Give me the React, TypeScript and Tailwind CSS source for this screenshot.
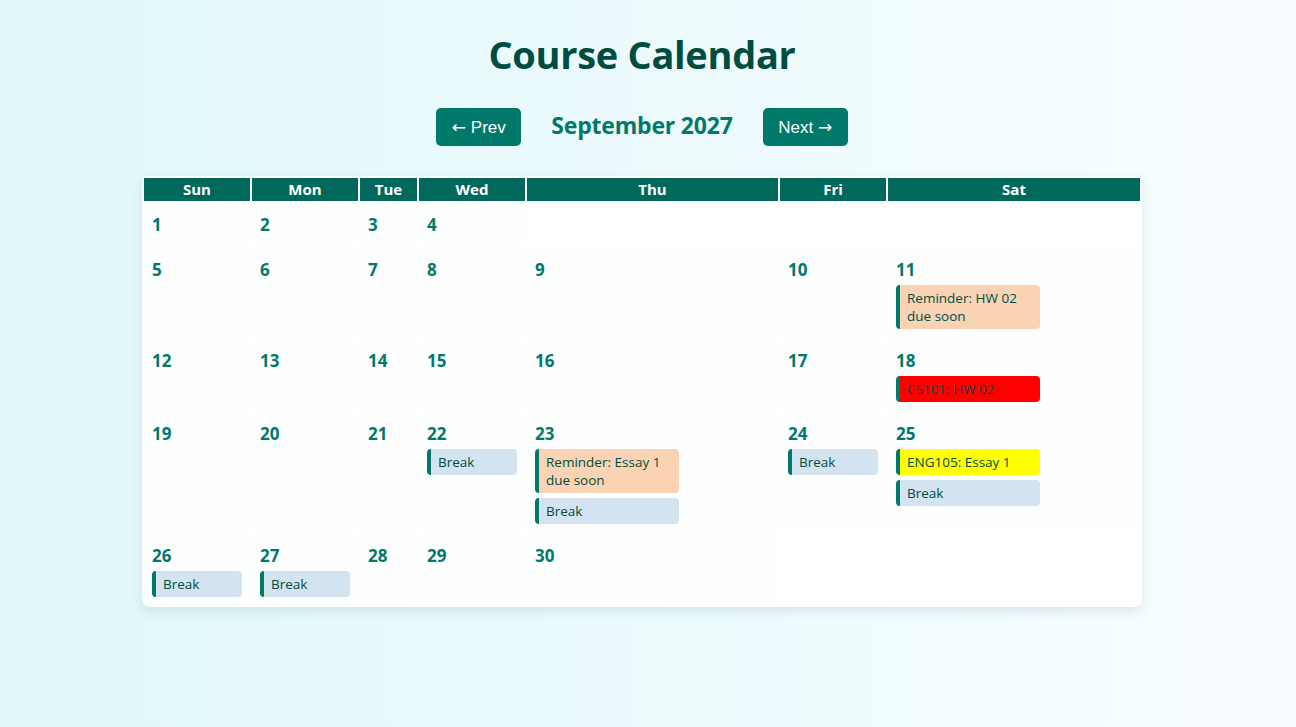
import React from 'react';

type CalEvent = { title: string; kind: 'reminder' | 'break' | 'due' | 'essay' };

const days = ['Sun', 'Mon', 'Tue', 'Wed', 'Thu', 'Fri', 'Sat'];

const events: Record<number, CalEvent[]> = {
  11: [{ title: 'Reminder: HW 02 due soon', kind: 'reminder' }],
  18: [{ title: 'CS101: HW 02', kind: 'due' }],
  22: [{ title: 'Break', kind: 'break' }],
  23: [
    { title: 'Reminder: Essay 1 due soon', kind: 'reminder' },
    { title: 'Break', kind: 'break' },
  ],
  24: [{ title: 'Break', kind: 'break' }],
  25: [
    { title: 'ENG105: Essay 1', kind: 'essay' },
    { title: 'Break', kind: 'break' },
  ],
  26: [{ title: 'Break', kind: 'break' }],
  27: [{ title: 'Break', kind: 'break' }],
};

const kindStyles: Record<CalEvent['kind'], string> = {
  reminder: 'bg-[#f9d3b4]',
  break: 'bg-[#d3e3ef]',
  due: 'bg-[#ff0000]',
  essay: 'bg-[#ffff00]',
};

const weeks: (number | null)[][] = [
  [1, 2, 3, 4, null, null, null],
  [5, 6, 7, 8, 9, 10, 11],
  [12, 13, 14, 15, 16, 17, 18],
  [19, 20, 21, 22, 23, 24, 25],
  [26, 27, 28, 29, 30, null, null],
];

const arrowFont = { fontFamily: '"DejaVu Sans", sans-serif' };

const App = () => {
  return (
    <div
      className="min-h-[727px] w-full bg-gradient-to-r from-[#e0f7fa] to-[#f8fdff] pr-3"
      style={{ fontFamily: '"Open Sans", "Noto Sans", sans-serif' }}
    >
      <div className="flex flex-col items-center pt-[28px]">
        <h1 className="text-[38px] leading-[52px] font-bold text-[#004d40] tracking-[-0.3px]">
          Course Calendar
        </h1>

        <div className="flex items-center gap-[30px] mt-[28px]">
          <button
            className="h-[38px] w-[85px] rounded-[5px] bg-[#00796b] text-white text-[17px]"
            style={{ fontFamily: '"Liberation Sans", Arial, sans-serif' }}
          >
            <span style={arrowFont}>←</span> Prev
          </button>
          <h2 className="text-[23px] font-bold text-[#00796b] tracking-[-0.2px] pb-1">September 2027</h2>
          <button
            className="h-[38px] w-[85px] rounded-[5px] bg-[#00796b] text-white text-[17px]"
            style={{ fontFamily: '"Liberation Sans", Arial, sans-serif' }}
          >
            Next <span style={arrowFont}>→</span>
          </button>
        </div>

        <div className="mt-[29px] w-[1000px] rounded-lg bg-white shadow-[0_4px_12px_rgba(0,80,90,0.12)] p-[2px]">
          <div className="grid grid-cols-[106px_106px_57px_106px_251px_106px_252px] gap-[2px]">
            {days.map((d) => (
              <div
                key={d}
                className="h-[23px] bg-[#00695c] text-white text-[15px] font-bold flex items-center justify-center"
              >
                {d}
              </div>
            ))}
            {weeks.map((week, wi) =>
              week.map((day, di) =>
                day === null ? (
                  <div key={`${wi}-${di}`} className="bg-white" />
                ) : (
                  <div key={`${wi}-${di}`} className="bg-[#fdfefe] p-2 flex flex-col">
                    <div className="text-[17px] leading-[27px] font-bold text-[#00796b]">{day}</div>
                    {events[day] && (
                      <div className="mt-[2px] flex flex-col gap-[5px]">
                        {events[day].map((ev, i) => (
                          <div
                            key={i}
                            className={`${kindStyles[ev.kind]} max-w-[144px] rounded-[4px] border-l-4 border-[#00796b] pl-[7px] pr-2 py-1 text-[13.5px] leading-[18px] text-[#004d40]`}
                          >
                            {ev.title}
                          </div>
                        ))}
                      </div>
                    )}
                  </div>
                )
              )
            )}
          </div>
        </div>
      </div>
    </div>
  );
};

export default App;
